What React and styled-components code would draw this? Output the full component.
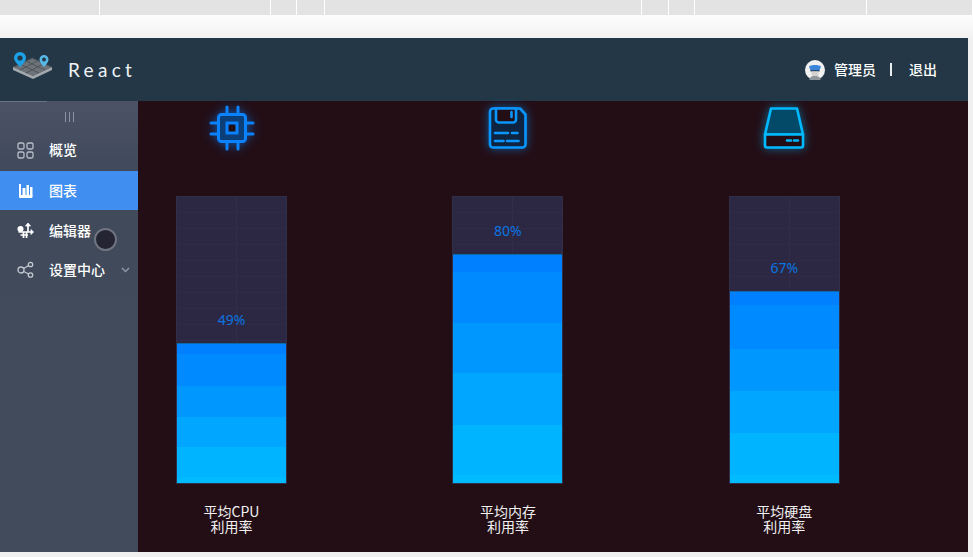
import React from 'react';
import styled, { createGlobalStyle } from 'styled-components';

const GlobalStyle = createGlobalStyle`
  html, body { margin: 0; padding: 0; background: #f0f0f0; }
  body { font-family: "Noto Sans CJK SC", "Noto Sans", sans-serif; overflow: hidden; }
`;

const Page = styled.div`
  width: 973px;
  height: 557px;
  display: flex;
  flex-direction: column;
  overflow: hidden;
`;

const TabStrip = styled.div`
  height: 15px;
  display: flex;
  background: #e3e3e3;
`;

const Tab = styled.div`
  width: ${(p) => p.$w}px;
  border-right: 1px solid #fff;
`;

const Gap = styled.div`
  height: 23px;
  background: linear-gradient(#fdfdfd, #f2f2f2);
`;

const Shell = styled.div`
  width: 968px;
  height: 514px;
  display: flex;
  flex-direction: column;
`;

const Header = styled.header`
  height: 63px;
  background: #233746;
  display: flex;
  align-items: center;
  color: #fff;
  padding: 0 31px 0 12px;
`;

const LogoBox = styled.div`
  display: flex;
  margin-bottom: 9px;
`;

const Brand = styled.div`
  font-family: "Lato", "Noto Sans", sans-serif;
  font-size: 19px;
  letter-spacing: 4.3px;
  margin-left: 15px;
  padding-bottom: 1px;
  color: #eef2f5;
`;

const User = styled.div`
  margin-left: auto;
  display: flex;
  align-items: center;
  font-size: 14px;
  font-weight: 500;
  color: #fff;
`;

const Divider = styled.span`
  width: 2px;
  height: 13px;
  background: #e8edf0;
  margin: 0 17px 0 14px;
`;

const UserText = styled.span`
  padding-bottom: 2px;
`;

const UserName = styled(UserText)`
  margin-left: 9px;
`;

const Body = styled.div`
  flex: 1;
  display: flex;
  min-height: 0;
`;

const Sidebar = styled.aside`
  position: relative;
  width: 138px;
  background: linear-gradient(#4c5266, #404a5b 70px, #414b5c);
  color: #f2f4f7;
`;

const Toggle = styled.div`
  height: 31px;
  display: flex;
  align-items: center;
  justify-content: center;
  gap: 3px;
  position: relative;
  &::before {
    content: '';
    position: absolute;
    left: 0;
    top: 0;
    width: 47px;
    height: 1px;
    background: #6a7385;
  }
`;

const ToggleBar = styled.i`
  width: 1px;
  height: 10px;
  background: #8b93a3;
`;

const MenuItem = styled.div`
  height: 39px;
  box-sizing: border-box;
  display: flex;
  align-items: center;
  padding-left: 17px;
  padding-bottom: ${(p) => (p.$first ? '3px' : '0')};
  font-size: 14px;
  font-weight: 500;
  background: ${(p) => (p.$active ? '#3f8ef0' : 'transparent')};
  color: #fff;
  margin-bottom: ${(p) => (p.$active ? '1px' : '0')};
`;

const MenuLabel = styled.span`
  margin-left: 15px;
  padding-bottom: 2px;
`;

const Caret = styled.svg`
  margin-left: auto;
  margin-right: 8px;
`;

const Handle = styled.div`
  position: absolute;
  left: 94px;
  top: 127px;
  width: 19px;
  height: 19px;
  border: 2px solid #6f7480;
  border-radius: 50%;
  background: #242433;
`;

const Main = styled.main`
  flex: 1;
  background: #230e16;
  display: flex;
  gap: 165.4px;
  padding: 4px 0 0 38px;
`;

const Column = styled.section`
  width: 111px;
  display: flex;
  flex-direction: column;
  align-items: center;
`;

const IconBox = styled.div`
  height: 46px;
  margin-bottom: 45px;
  display: flex;
  align-items: center;
  justify-content: center;
`;

const Bar = styled.div`
  width: 111px;
  height: 288px;
  display: flex;
  flex-direction: column;
  justify-content: flex-end;
  outline: 1px solid #2f2f4a;
  outline-offset: -1px;
  background-color: #2c2843;
  background-image:
    linear-gradient(#302b48 1px, transparent 1px),
    linear-gradient(90deg, transparent 60px, #322d4b 60px, #322d4b 61px, transparent 61px);
  background-size: 111px 16px, 111px 100%;
`;

const Percent = styled.div`
  font-family: "Noto Sans", sans-serif;
  font-size: 14px;
  line-height: 16px;
  color: #0a74e0;
  text-align: center;
  margin-bottom: 15px;
`;

const Fill = styled.div`
  height: ${(p) => p.$value}%;
  display: flex;
  flex-direction: column;
  flex-shrink: 0;
  outline: 1px solid #0b6aa8;
  outline-offset: -1px;
`;

const Band = styled.div`
  height: ${(p) => p.$h}px;
  background: ${(p) => p.$c};
`;

const Caption = styled.div`
  margin-top: 20px;
  font-size: 14px;
  line-height: 15px;
  text-align: center;
  color: #f1f1f1;
`;

const GlowSvg = styled.svg`
  overflow: visible;
  filter: drop-shadow(0 0 5px ${(p) => p.$glow});
`;

const tabs = [100, 171, 25, 28, 318, 27, 25, 172, 106];

const CpuIcon = () => (
  <GlowSvg $glow="rgba(0,128,255,.6)" width="46" height="46" viewBox="0 0 46 46" fill="none" stroke="#0a82ff" strokeWidth="3" strokeLinecap="round">
    <rect x="9.500" y="9.500" width="27" height="27" rx="3" fill="#0c3f78" />
    <rect x="18" y="18" width="10" height="10" fill="#230e16" />
    <path d="M18 2v7M29 2v7M18 37v7M29 37v7M2 18h7M2 29h7M37 18h7M37 29h7" />
  </GlowSvg>
);

const SaveIcon = () => (
  <GlowSvg $glow="rgba(0,150,255,.55)" width="38" height="42" viewBox="0 0 38 42" fill="none" stroke="#0a96ff" strokeWidth="2.600" strokeLinecap="round" strokeLinejoin="round">
    <path d="M4 1.500h27l5.500 6v30a3 3 0 0 1-3 3H4a3 3 0 0 1-3-3v-33a3 3 0 0 1 3-3z" fill="#0e2440" />
    <path d="M7 1.500v11a3 3 0 0 0 3 3h14a3 3 0 0 0 3-3v-11z" fill="#230e16" />
    <path d="M22.500 5v5M6 26h13M23 26h5.500M6 34h8.500M18 34h11.500" />
  </GlowSvg>
);

const DiskIcon = () => (
  <GlowSvg $glow="rgba(0,180,255,.55)" width="40" height="42" viewBox="0 0 40 42" fill="none" stroke="#00b9ff" strokeWidth="2.600" strokeLinecap="round" strokeLinejoin="round">
    <path d="M7 1.500h26l6 26H1z" fill="#034a68" />
    <path d="M1 27.500h38v11a2 2 0 0 1-2 2H3a2 2 0 0 1-2-2z" fill="#230e16" />
    <path d="M23 33.500h4M30 33.500h4" />
  </GlowSvg>
);

const Logo = () => (
  <svg width="41" height="27" viewBox="0 0 41 27">
    <path d="M1 15 20 6l20 9-19 9z" fill="#6e7379" />
    <path d="M1 15v3l20 9v-3zM40 15v3l-19 9v-3z" fill="#a3a8ad" />
    <path d="M8 12l19 9M14 9l19 9M20 6l19 9M33 11 14 21M27 8 8 18M21 6 3 15" stroke="#4b545c" strokeWidth="1" />
    <path d="M8 0a6 6 0 0 1 6 6c0 3.500-6 9-6 9S2 9.500 2 6a6 6 0 0 1 6-6z" fill="#1da1e6" />
    <circle cx="8" cy="6" r="2.600" fill="#233746" />
    <path d="M32 3a4.500 4.500 0 0 1 4.500 4.500C36.500 10.500 32 15 32 15s-4.500-4.500-4.500-7.500A4.500 4.500 0 0 1 32 3z" fill="#57b8e6" />
    <circle cx="32" cy="7.500" r="2" fill="#233746" />
  </svg>
);

const Avatar = () => (
  <svg width="20" height="20" viewBox="0 0 20 20">
    <circle cx="10" cy="10" r="10" fill="#f1f1f1" />
    <path d="M4 6.500C6 4.500 14 4.500 16 6.500L14.500 10.500h-9z" fill="#3b86d8" />
    <rect x="5.500" y="10" width="9" height="1.500" fill="#27476b" />
    <path d="M6.500 11.500h7v2.500a3.500 3.500 0 0 1-7 0z" fill="#d5d2d0" />
    <path d="M4.500 20c0-3 2-4 5.500-4s5.500 1 5.500 4z" fill="#8f959c" />
  </svg>
);

const GridIcon = () => (
  <svg width="17" height="17" viewBox="0 0 17 17" fill="none" stroke="#b9bfc8" strokeWidth="1.300">
    <rect x="1" y="1" width="6" height="6" rx="1.500" />
    <rect x="10" y="1" width="6" height="6" rx="1.500" />
    <rect x="1" y="10" width="6" height="6" rx="1.500" />
    <rect x="10" y="10" width="6" height="6" rx="1.500" />
  </svg>
);

const ChartIcon = () => (
  <svg width="17" height="17" viewBox="0 0 17 17" fill="#fff">
    <rect x="2" y="2" width="2" height="12" />
    <rect x="5.500" y="6" width="3" height="8" />
    <rect x="9.500" y="3" width="2.500" height="11" />
    <rect x="13" y="5" width="2.500" height="9" />
    <rect x="2" y="13" width="13.500" height="3" rx="1" />
  </svg>
);

const EditorIcon = () => (
  <svg width="17" height="17" viewBox="0 0 17 17" fill="none" stroke="#fff" strokeWidth="1.700">
    <circle cx="3.500" cy="7" r="2.200" fill="#fff" />
    <path d="M1.500 10h13M3.500 13h7.500M6.500 10v6M9.500 10v6M11 2v8" />
    <path d="M8.500 4L11 1l2.500 3zM14 7.500l2.500 2.500L14 12.500z" fill="#fff" strokeWidth="0.800" />
  </svg>
);

const ShareIcon = () => (
  <svg width="17" height="17" viewBox="0 0 17 17" fill="none" stroke="#c3c8cf" strokeWidth="1.300">
    <circle cx="4" cy="9" r="3" />
    <circle cx="13.500" cy="3.500" r="2.200" />
    <circle cx="13.500" cy="14" r="2.200" />
    <path d="M6.700 7.500l5-3M6.700 10.500l5 2.500" />
  </svg>
);

const C1 = '#0080ff';
const C1b = '#008aff';
const C2 = '#0098ff';
const C3 = '#00a6ff';
const C4 = '#00b4ff';
const C5 = '#00bbff';

const stats = [
  {
    value: 49,
    icon: <CpuIcon />,
    title: '平均CPU',
    bands: [[11, C1], [32, C1b], [31, C2], [30, C3], [30, C4], [7, C5]],
  },
  {
    value: 80,
    icon: <SaveIcon />,
    title: '平均内存',
    bands: [[18, C1], [51, C1b], [50, C2], [52, C3], [50, C4], [9, C5]],
  },
  {
    value: 67,
    icon: <DiskIcon />,
    title: '平均硬盘',
    bands: [[14, C1], [44, C1b], [42, C2], [42, C3], [42, C4], [9, C5]],
  },
];

const App = () => {
  return (
    <Page>
      <GlobalStyle />
      <TabStrip>
        {tabs.map((w, i) => (
          <Tab key={i} $w={w} />
        ))}
      </TabStrip>
      <Gap />
      <Shell>
        <Header>
          <LogoBox>
            <Logo />
          </LogoBox>
          <Brand>React</Brand>
          <User>
            <Avatar />
            <UserName>管理员</UserName>
            <Divider />
            <UserText>退出</UserText>
          </User>
        </Header>
        <Body>
          <Sidebar>
            <Toggle>
              <ToggleBar />
              <ToggleBar />
              <ToggleBar />
            </Toggle>
            <MenuItem $first>
              <GridIcon />
              <MenuLabel>概览</MenuLabel>
            </MenuItem>
            <MenuItem $active>
              <ChartIcon />
              <MenuLabel>图表</MenuLabel>
            </MenuItem>
            <MenuItem>
              <EditorIcon />
              <MenuLabel>编辑器</MenuLabel>
            </MenuItem>
            <MenuItem>
              <ShareIcon />
              <MenuLabel>设置中心</MenuLabel>
              <Caret width="9" height="6" viewBox="0 0 9 6" fill="none" stroke="#8e96a3" strokeWidth="1.500">
                <path d="M1 1l3.500 3.500L8 1" />
              </Caret>
            </MenuItem>
            <Handle />
          </Sidebar>
          <Main>
            {stats.map((s) => (
              <Column key={s.title}>
                <IconBox>{s.icon}</IconBox>
                <Bar>
                  <Percent>{s.value}%</Percent>
                  <Fill $value={s.value}>
                    {s.bands.map(([h, c], i) => (
                      <Band key={i} $h={h} $c={c} />
                    ))}
                  </Fill>
                </Bar>
                <Caption>
                  {s.title}
                  <br />
                  利用率
                </Caption>
              </Column>
            ))}
          </Main>
        </Body>
      </Shell>
    </Page>
  );
};

export default App;
